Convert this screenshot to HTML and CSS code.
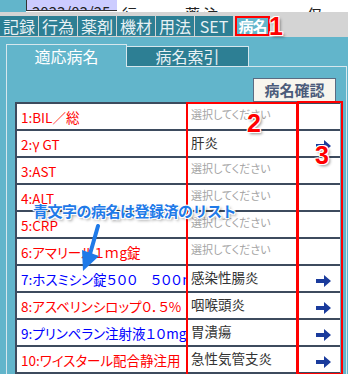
FILE: index.html
```html
<!DOCTYPE html>
<html lang="ja">
  <head>
    <meta charset="UTF-8" />
    <title>病名</title>
    <link rel="stylesheet" href="styles.css">
  </head>
  <body>
    <div class="topbar">
      <div class="side"></div>
      <div class="date"><span>2023/03/25</span></div>
      <div class="cell c1"><span>行</span></div>
      <div class="cell c2"><span>薬 注</span></div>
      <div class="cell c3"><span>仅</span></div>
    </div>

    <div class="menu">
      <div class="tab">記録</div>
      <div class="tab">行為</div>
      <div class="tab">薬剤</div>
      <div class="tab">機材</div>
      <div class="tab">用法</div>
      <div class="tab">SET</div>
      <div class="tab active">病名</div>
    </div>

    <div class="panel">
      <div class="subtabs">
        <div class="subtab on">適応病名</div>
        <div class="subtab">病名索引</div>
        <div class="fill"></div>
      </div>
      <div class="content">
        <div class="btn-row">
          <button class="confirm">病名確認</button>
        </div>
        <table class="list">
          <colgroup>
            <col class="w1" />
            <col class="w2" />
            <col class="w3" />
          </colgroup>
          <tr>
            <td class="name red">1:BIL／総</td>
            <td class="pick hint">選択してください</td>
            <td class="go"></td>
          </tr>
          <tr>
            <td class="name red">2:γ GT</td>
            <td class="pick">肝炎</td>
            <td class="go"><svg class="arr" viewBox="0 0 15 12"><path d="M0 4h8V0l7 6-7 6V8H0z"/></svg></td>
          </tr>
          <tr>
            <td class="name red">3:AST</td>
            <td class="pick hint">選択してください</td>
            <td class="go"></td>
          </tr>
          <tr>
            <td class="name red">4:ALT</td>
            <td class="pick hint">選択してください</td>
            <td class="go"></td>
          </tr>
          <tr>
            <td class="name red">5:CRP</td>
            <td class="pick hint">選択してください</td>
            <td class="go"></td>
          </tr>
          <tr>
            <td class="name red">6:アマリール１ｍg錠</td>
            <td class="pick hint">選択してください</td>
            <td class="go"></td>
          </tr>
          <tr>
            <td class="name blue">7:ホスミシン錠５００　５００ｍｇ</td>
            <td class="pick">感染性腸炎</td>
            <td class="go"><svg class="arr" viewBox="0 0 15 12"><path d="M0 4h8V0l7 6-7 6V8H0z"/></svg></td>
          </tr>
          <tr>
            <td class="name red">8:アスベリンシロップ０．５%</td>
            <td class="pick">咽喉頭炎</td>
            <td class="go"><svg class="arr" viewBox="0 0 15 12"><path d="M0 4h8V0l7 6-7 6V8H0z"/></svg></td>
          </tr>
          <tr>
            <td class="name blue">9:プリンペラン注射液１０mg</td>
            <td class="pick">胃潰瘍</td>
            <td class="go"><svg class="arr" viewBox="0 0 15 12"><path d="M0 4h8V0l7 6-7 6V8H0z"/></svg></td>
          </tr>
          <tr>
            <td class="name red">10:ワイスタール配合静注用</td>
            <td class="pick">急性気管支炎</td>
            <td class="go"><svg class="arr" viewBox="0 0 15 12"><path d="M0 4h8V0l7 6-7 6V8H0z"/></svg></td>
          </tr>
        </table>
      </div>
    </div>

    <!-- annotations drawn over the screen -->
    <div class="mark box2"></div>
    <div class="mark box3"></div>
    <div class="num n1">1</div>
    <div class="num n2">2</div>
    <div class="num n3">3</div>
    <div class="note">青文字の病名は登録済のリスト</div>
    <svg class="pointer" viewBox="0 0 30 52">
      <path d="M20 2 L12 30" stroke="#1f7ae8" stroke-width="4" stroke-linecap="round" fill="none"/>
      <path d="M4 26 L21 32 L5 47 Z" fill="#1f7ae8"/>
    </svg>
  </body>
</html>
```

FILE: styles.css
```css
body {
  margin: 0;
  width: 348px;
  height: 374px;
  overflow: hidden;
  position: relative;
  background: #d4d4d4;
  font-family: "Noto Sans CJK JP", "DejaVu Sans", sans-serif;
}

/* top strip, only bottoms of the glyphs show */
.topbar {
  display: flex;
  height: 12px;
  background: #fff;
  overflow: hidden;
}
.topbar .side {
  width: 26px;
  background: #62b5cb;
}
.date,
.cell {
  display: flex;
  align-items: flex-end;
  font-size: 15px;
  line-height: 16px;
  color: #222;
  overflow: hidden;
  white-space: nowrap;
}
.date {
  width: 91px;
  background: #ccccff;
  border-left: 1px solid #333;
  border-bottom: 1px solid #333;
  box-sizing: border-box;
  padding-left: 5px;
  margin-bottom: 1px;
}
.date span,
.cell span {
  margin-bottom: -10px;
}
.c1 {
  padding-left: 5px;
  width: 60px;
}
.c2 {
  width: 122px;
  padding-left: 3px;
}
.c3 {
  flex: 1;
}

/* main tab bar */
.menu {
  display: flex;
  gap: 1px;
  padding: 4px 0 1px;
  height: 20px;
}
.tab {
  width: 38px;
  background: #2d7f94;
  color: #e8f1f4;
  font-size: 16px;
  line-height: 20px;
  text-align: center;
  white-space: nowrap;
  font-feature-settings: "palt";
}
.tab.active {
  width: 35px;
  margin-left: 1px;
  box-sizing: border-box;
  border: 2px solid #ff0000;
  background: #62b5cb;
  color: #fff;
  font-size: 15px;
  font-weight: bold;
  letter-spacing: -1px;
  line-height: 16px;
  overflow: hidden;
}

/* panel */
.panel {
  background: #62b5cb;
  height: 337px;
  padding: 7px 1px 0 6px;
  box-sizing: border-box;
}
.subtabs {
  display: flex;
  align-items: flex-end;
  height: 23px;
}
.subtab {
  box-sizing: border-box;
  width: 122px;
  height: 21px;
  background: #2d7f94;
  border: 1px solid #d6e7ed;
  border-left: none;
  color: #e8f1f4;
  font-size: 16px;
  line-height: 19px;
  text-align: center;
}
.subtab.on {
  width: 121px;
  height: 23px;
  background: #62b5cb;
  border-left: 1px solid #d6e7ed;
  border-bottom: none;
  color: #fff;
  line-height: 22px;
}
.fill {
  flex: 1;
  border-bottom: 1px solid #d6e7ed;
}
.content {
  border-left: 1px solid #d6e7ed;
  border-right: 1px solid #d6e7ed;
  padding: 11px 6px 0 8px;
  height: 320px;
}
.btn-row {
  display: flex;
  justify-content: flex-end;
}
.confirm {
  width: 83px;
  height: 24px;
  margin-right: 4px;
  padding: 0;
  background: #f7f5ee;
  border: 1px solid #5a6b82;
  color: #4b5b7b;
  font-family: inherit;
  font-size: 15px;
  font-weight: bold;
  line-height: 20px;
}

/* list */
.list {
  width: 324px;
  border-collapse: collapse;
  table-layout: fixed;
  background: #fff;
  border-top: 2px solid #3d4b5e;
  border-left: 2px solid #3d4b5e;
}
.w1 {
  width: 172px;
}
.w2 {
  width: 110px;
}
.w3 {
  width: 42px;
}
.list td {
  height: 25px;
  padding: 0;
  border-bottom: 2px solid #3d4b5e;
  white-space: nowrap;
  overflow: hidden;
  font-feature-settings: "palt";
}
.name {
  padding-left: 4px !important;
  font-size: 13.5px;
}
.red {
  color: #ff0000;
}
.blue {
  color: #0000ff;
}
.pick {
  padding-left: 3px !important;
  font-size: 13.5px;
  color: #333;
  vertical-align: top;
  line-height: 22px;
}
.pick.hint {
  color: #a4a4a4;
  font-size: 11px;
  line-height: 20px;
}
.go {
  text-align: right;
  padding-right: 9px !important;
  vertical-align: middle;
}
.arr {
  width: 15px;
  height: 12px;
  fill: #1a3b9c;
  display: block;
  margin: 4px 0 0 auto;
}

/* annotations */
.mark {
  position: absolute;
  border: 2px solid #ff0000;
}
.box2 {
  left: 186px;
  top: 102px;
  width: 108px;
  height: 290px;
}
.box3 {
  left: 297px;
  top: 101px;
  width: 42px;
  height: 270px;
}
.num {
  position: absolute;
  font-family: "Liberation Sans", sans-serif;
  font-weight: bold;
  font-size: 25px;
  line-height: 25px;
  color: #ff0000;
  text-shadow: -1px -1px 0 #fff, 1px -1px 0 #fff, -1px 1px 0 #fff, 1px 1px 0 #fff,
    2px 2px 3px rgba(0, 0, 0, 0.45);
}
.n1 {
  left: 269px;
  top: 14px;
}
.n2 {
  left: 247px;
  top: 111px;
}
.n3 {
  left: 315px;
  top: 143px;
}
.note {
  position: absolute;
  left: 33px;
  top: 202px;
  font-size: 15px;
  line-height: 18px;
  font-weight: bold;
  letter-spacing: -0.5px;
  color: #1f7ae8;
  white-space: nowrap;
  text-shadow: -1px -1px 0 #fff, 1px -1px 0 #fff, -1px 1px 0 #fff, 1px 1px 0 #fff,
    2px 2px 3px rgba(0, 0, 0, 0.4);
}
.pointer {
  position: absolute;
  left: 78px;
  top: 224px;
  width: 30px;
  height: 52px;
}
```
